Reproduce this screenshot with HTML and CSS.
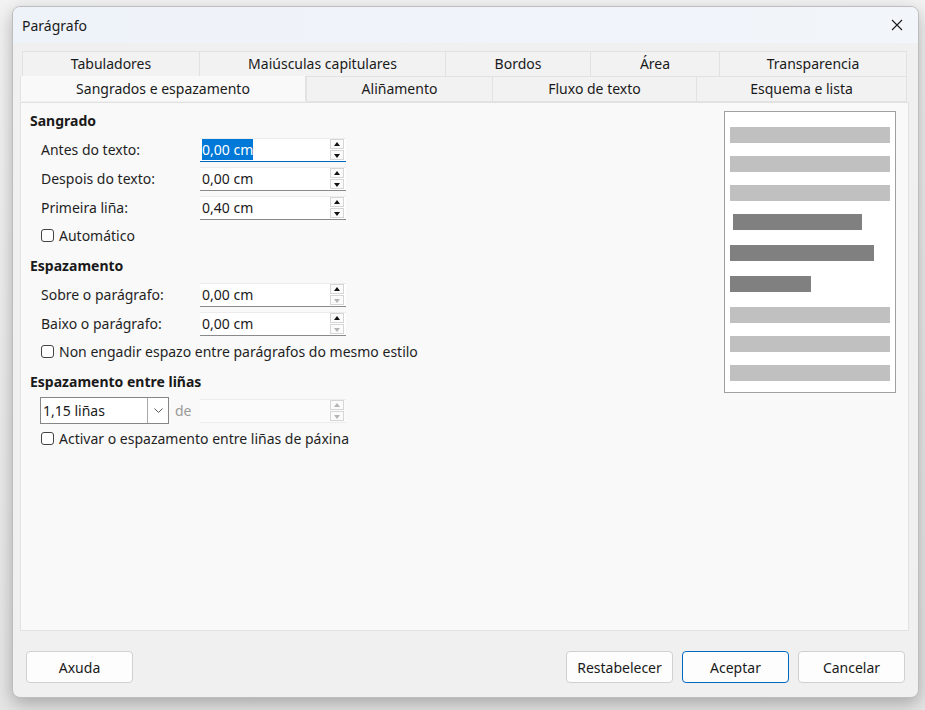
FILE: index.html
```html
<!DOCTYPE html>
<html lang="gl">
<head>
    <meta charset="UTF-8">
    <title>Parágrafo</title>
    <link rel="stylesheet" href="styles.css">
</head>
<body>
    <div class="dialog">
        <div class="titlebar">
            <span class="title">Parágrafo</span>
            <button class="close" aria-label="Pechar">
                <svg width="12" height="12" viewBox="0 0 12 12"><path d="M1 1 L11 11 M11 1 L1 11" stroke="#1a1a1a" stroke-width="1.1" fill="none"/></svg>
            </button>
        </div>

        <div class="tabs">
            <div class="tab-row back">
                <div class="tab" style="width:178px">Tabuladores</div>
                <div class="tab" style="width:246px">Maiúsculas capitulares</div>
                <div class="tab" style="width:145px">Bordos</div>
                <div class="tab" style="width:129px">Área</div>
                <div class="tab" style="width:187px">Transparencia</div>
            </div>
            <div class="tab-row front">
                <div class="tab active" style="width:286px">Sangrados e espazamento</div>
                <div class="tab" style="width:187px">Aliñamento</div>
                <div class="tab" style="width:204px">Fluxo de texto</div>
                <div class="tab" style="width:210px">Esquema e lista</div>
            </div>
        </div>

        <div class="panel">
            <div class="form">
                <div class="section-title first">Sangrado</div>
                <div class="row">
                    <label>Antes do texto:</label>
                    <div class="field focused">
                        <span class="value"><span class="selected">0,00 cm</span></span>
                        <div class="spin"><span class="up"></span><span class="down"></span></div>
                    </div>
                </div>
                <div class="row">
                    <label>Despois do texto:</label>
                    <div class="field">
                        <span class="value">0,00 cm</span>
                        <div class="spin"><span class="up"></span><span class="down"></span></div>
                    </div>
                </div>
                <div class="row">
                    <label>Primeira liña:</label>
                    <div class="field">
                        <span class="value">0,40 cm</span>
                        <div class="spin"><span class="up"></span><span class="down"></span></div>
                    </div>
                </div>
                <div class="check"><span class="box"></span>Automático</div>

                <div class="section-title">Espazamento</div>
                <div class="row">
                    <label>Sobre o parágrafo:</label>
                    <div class="field">
                        <span class="value">0,00 cm</span>
                        <div class="spin"><span class="up"></span><span class="down off"></span></div>
                    </div>
                </div>
                <div class="row">
                    <label>Baixo o parágrafo:</label>
                    <div class="field">
                        <span class="value">0,00 cm</span>
                        <div class="spin"><span class="up"></span><span class="down off"></span></div>
                    </div>
                </div>
                <div class="check"><span class="box"></span>Non engadir espazo entre parágrafos do mesmo estilo</div>

                <div class="section-title">Espazamento entre liñas</div>
                <div class="row line-row">
                    <div class="combo">
                        <span class="value">1,15 liñas</span>
                        <span class="drop">
                            <svg width="9" height="6" viewBox="0 0 9 6"><path d="M0.5 0.5 L4.5 4.5 L8.5 0.5" stroke="#555" stroke-width="1" fill="none"/></svg>
                        </span>
                    </div>
                    <span class="de">de</span>
                    <div class="field disabled">
                        <span class="value"></span>
                        <div class="spin"><span class="up off"></span><span class="down off"></span></div>
                    </div>
                </div>
                <div class="check"><span class="box"></span>Activar o espazamento entre liñas de páxina</div>
            </div>

            <div class="preview">
                <div class="bar light"></div>
                <div class="bar light"></div>
                <div class="bar light"></div>
                <div class="bar dark" style="width:129px;margin-left:3px"></div>
                <div class="bar dark" style="width:144px"></div>
                <div class="bar dark" style="width:81px"></div>
                <div class="bar light"></div>
                <div class="bar light"></div>
                <div class="bar light"></div>
            </div>
        </div>

        <div class="buttons">
            <button class="btn">Axuda</button>
            <div class="spacer"></div>
            <button class="btn">Restabelecer</button>
            <button class="btn default">Aceptar</button>
            <button class="btn">Cancelar</button>
        </div>
    </div>
</body>
</html>
```

FILE: styles.css
```css
* {
    margin: 0;
    padding: 0;
    box-sizing: border-box;
}

body {
    background: linear-gradient(#f3f3f3, #e6e6e6);
    font-family: 'Noto Sans', 'Open Sans', sans-serif;
    font-size: 14px;
    color: #1a1a1a;
    height: 710px;
    overflow: hidden;
    padding: 6px 0 0 12px;
}

.dialog {
    width: 907px;
    height: 692px;
    background-color: #f0f0f0;
    border: 1px solid #bdbdbd;
    border-radius: 8px;
    box-shadow: 0 6px 18px rgba(0, 0, 0, 0.28);
    overflow: hidden;
    display: flex;
    flex-direction: column;
}

.titlebar {
    height: 36px;
    background: linear-gradient(90deg, #eef2f9, #f2f5fa);
    display: flex;
    align-items: center;
    justify-content: space-between;
    padding: 0 14px 0 9px;
    flex-shrink: 0;
}

.title {
    font-size: 14px;
    color: #1a1a1a;
}

.close {
    border: none;
    background: transparent;
    width: 14px;
    height: 14px;
    display: flex;
    align-items: center;
    justify-content: center;
}

/* tabs */
.tabs {
    margin: 8px 0 0 7px;
    width: 889px;
}

.tab-row {
    display: flex;
}

.tab-row.back {
    padding-left: 2px;
    height: 26px;
}

.tab-row.front {
    height: 25px;
}

.tab {
    font-size: 14px;
    text-align: center;
    line-height: 24px;
    background-color: #f2f2f2;
    border: 1px solid #e2e2e2;
    border-left: none;
    color: #1a1a1a;
}

.tab-row.back .tab:first-child,
.tab-row.front .tab:nth-child(2) {
    border-left: 1px solid #e2e2e2;
}

.tab-row.front .tab {
    border-top: none;
    height: 25px;
}

.tab.active {
    background-color: #f9f9f9;
    border: 1px solid #e2e2e2;
    border-bottom: none;
    margin-top: -1px;
    height: 26px;
    line-height: 25px;
    position: relative;
    z-index: 1;
}

/* main page */
.panel {
    margin-left: 7px;
    width: 889px;
    height: 529px;
    background-color: #f9f9f9;
    border: 1px solid #e2e2e2;
    display: flex;
    justify-content: space-between;
    padding: 4px 12px 0 9px;
}

.form {
    display: flex;
    flex-direction: column;
}

.section-title {
    font-weight: bold;
    height: 28px;
    line-height: 28px;
    margin-top: 4px;
}

.section-title.first {
    margin-top: 0;
}

.row {
    display: grid;
    grid-template-columns: 159px 146px;
    align-items: center;
    height: 29px;
    padding-left: 11px;
}

.row label {
    color: #1f1f1f;
}

.field {
    height: 24px;
    background-color: #fff;
    border-top: 1px solid #ececec;
    border-bottom: 1px solid #8a8a8a;
    display: flex;
    align-items: center;
    justify-content: space-between;
    padding: 0 2px 0 2px;
}

.field.focused {
    border-bottom: 1px solid #0067c0;
}

.field.disabled {
    background-color: #fbfbfb;
    border-top: 1px solid #ececec;
    border-bottom: 1px solid #ececec;
}

.field .value {
    line-height: 20px;
}

.selected {
    background-color: #0078d7;
    color: #fff;
    padding: 1px 0;
}

.spin {
    display: flex;
    flex-direction: column;
    gap: 1px;
    width: 14px;
}

.spin span {
    height: 10px;
    border: 1px solid #d6d6d6;
    background-color: #fbfbfb;
    position: relative;
}

.spin span::after {
    content: '';
    position: absolute;
    left: 3px;
    top: 2px;
    border-left: 3.5px solid transparent;
    border-right: 3.5px solid transparent;
}

.spin .up::after {
    border-bottom: 4px solid #111;
}

.spin .down::after {
    top: 3px;
    border-top: 4px solid #111;
}

.spin .up.off::after {
    border-bottom-color: #b4b4b4;
}

.spin .down.off::after {
    border-top-color: #b4b4b4;
}

.line-row {
    display: flex;
    padding-left: 10px;
}

.combo {
    width: 129px;
    height: 27px;
    border: 1px solid #868686;
    background-color: #fff;
    display: flex;
    align-items: center;
    justify-content: space-between;
}

.combo .value {
    padding-left: 2px;
}

.combo .drop {
    width: 21px;
    height: 100%;
    border-left: 1px solid #a8a8a8;
    display: flex;
    align-items: center;
    justify-content: center;
}

.de {
    color: #9a9a9a;
    margin: 0 8px 0 6px;
}

.line-row .field {
    width: 146px;
}

.check {
    display: flex;
    align-items: center;
    height: 26px;
    padding-left: 11px;
    color: #1f1f1f;
}

.check .box {
    width: 13px;
    height: 13px;
    border: 1px solid #444;
    border-radius: 3px;
    background-color: #fff;
    margin-right: 5px;
}

/* paragraph preview */
.preview {
    width: 172px;
    height: 282px;
    margin-top: 4px;
    background-color: #fff;
    border: 1px solid #a0a0a0;
    padding: 15px 5px 0 5px;
    display: flex;
    flex-direction: column;
    gap: 13.5px;
}

.bar {
    height: 15.5px;
    width: 160px;
    flex-shrink: 0;
}

.bar.light {
    background-color: #c0c0c0;
}

.bar.dark {
    background-color: #808080;
}

.bar.dark + .bar {
    margin-top: 2px;
}

/* bottom buttons */
.buttons {
    display: flex;
    gap: 9px;
    padding: 20px 13px 0 13px;
}

.spacer {
    flex: 1;
}

.btn {
    width: 107px;
    height: 32px;
    font-family: 'Noto Sans', 'Open Sans', sans-serif;
    font-size: 14px;
    color: #1a1a1a;
    background-color: #fdfdfd;
    border: 1px solid #d0d0d0;
    border-radius: 4px;
}

.btn.default {
    border-color: #0067c0;
}
```
